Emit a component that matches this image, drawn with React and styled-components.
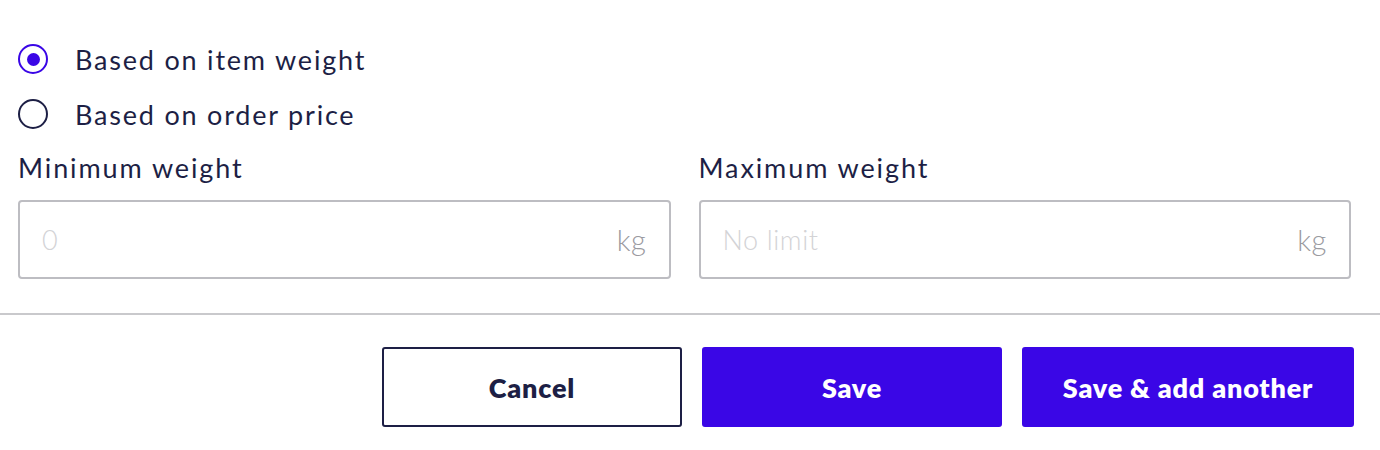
import React, { useState } from 'react';
import styled, { createGlobalStyle } from 'styled-components';

const GlobalStyle = createGlobalStyle`
  body {
    margin: 0;
    background: #ffffff;
    font-family: Lato, "Noto Sans", sans-serif;
    color: #1d1f45;
  }
`;

const Page = styled.div`
  width: 1380px;
  padding-top: 41px;
`;

const Section = styled.div`
  padding: 0 29px 0 18px;
`;

const RadioGroup = styled.div`
  display: flex;
  flex-direction: column;
  gap: 19px;
`;

const RadioRow = styled.label`
  display: flex;
  align-items: center;
  gap: 27px;
  height: 36px;
  font-size: 27px;
  letter-spacing: 1.8px;
  cursor: pointer;
`;

const RadioCircle = styled.span`
  width: 30px;
  height: 30px;
  border-radius: 50%;
  box-sizing: border-box;
  border: 2px solid ${(p) => (p.checked ? '#3a06e6' : '#1d1f45')};
  display: flex;
  align-items: center;
  justify-content: center;

  &::after {
    content: '';
    width: 13px;
    height: 13px;
    border-radius: 50%;
    background: ${(p) => (p.checked ? '#3a06e6' : 'transparent')};
  }
`;

const Fields = styled.div`
  display: grid;
  grid-template-columns: 1fr 1fr;
  gap: 28px;
  margin-top: 20px;
`;

const Field = styled.div`
  display: flex;
  flex-direction: column;
  gap: 16px;
`;

const Label = styled.div`
  font-size: 27px;
  letter-spacing: 1.9px;
  line-height: 32px;
`;

const InputBox = styled.div`
  display: flex;
  align-items: center;
  height: 79px;
  box-sizing: border-box;
  border: 2px solid #bdbdc2;
  border-radius: 4px;
  padding: 0 22px 0 20px;
`;

const Input = styled.input`
  flex: 1;
  border: none;
  outline: none;
  font-family: Lato, "Noto Sans", sans-serif;
  font-size: 27px;
  font-weight: 300;
  letter-spacing: 0.6px;
  color: #1d1f45;
  background: transparent;

  &::placeholder {
    color: #d3d3d6;
  }
`;

const Unit = styled.span`
  font-size: 29px;
  font-weight: 300;
  letter-spacing: 0.6px;
  color: #9a9aa0;
`;

const Divider = styled.hr`
  margin: 34px 0 0;
  border: none;
  border-top: 2px solid #c9c9cc;
`;

const Footer = styled.div`
  display: flex;
  justify-content: flex-end;
  gap: 20px;
  padding: 32px 26px 0 0;
`;

const Button = styled.button`
  width: ${(p) => p.width}px;
  height: 80px;
  box-sizing: border-box;
  border-radius: 3px;
  font-family: Lato, "Noto Sans", sans-serif;
  font-size: 27px;
  font-weight: 800;
  letter-spacing: 0.8px;
  cursor: pointer;
  border: 2px solid ${(p) => (p.primary ? '#3a06e6' : '#1d1f45')};
  background: ${(p) => (p.primary ? '#3a06e6' : '#ffffff')};
  color: ${(p) => (p.primary ? '#ffffff' : '#1d1f45')};
`;

export default function App() {
  const [basis, setBasis] = useState('weight');

  return (
    <Page>
      <GlobalStyle />
      <Section>
        <RadioGroup>
          <RadioRow onClick={() => setBasis('weight')}>
            <RadioCircle checked={basis === 'weight'} />
            Based on item weight
          </RadioRow>
          <RadioRow onClick={() => setBasis('price')}>
            <RadioCircle checked={basis === 'price'} />
            Based on order price
          </RadioRow>
        </RadioGroup>
        <Fields>
          <Field>
            <Label>Minimum weight</Label>
            <InputBox>
              <Input placeholder="0" />
              <Unit>kg</Unit>
            </InputBox>
          </Field>
          <Field>
            <Label>Maximum weight</Label>
            <InputBox>
              <Input placeholder="No limit" />
              <Unit>kg</Unit>
            </InputBox>
          </Field>
        </Fields>
      </Section>
      <Divider />
      <Footer>
        <Button width={300}>Cancel</Button>
        <Button width={300} primary>Save</Button>
        <Button width={332} primary>Save &amp; add another</Button>
      </Footer>
    </Page>
  );
}
